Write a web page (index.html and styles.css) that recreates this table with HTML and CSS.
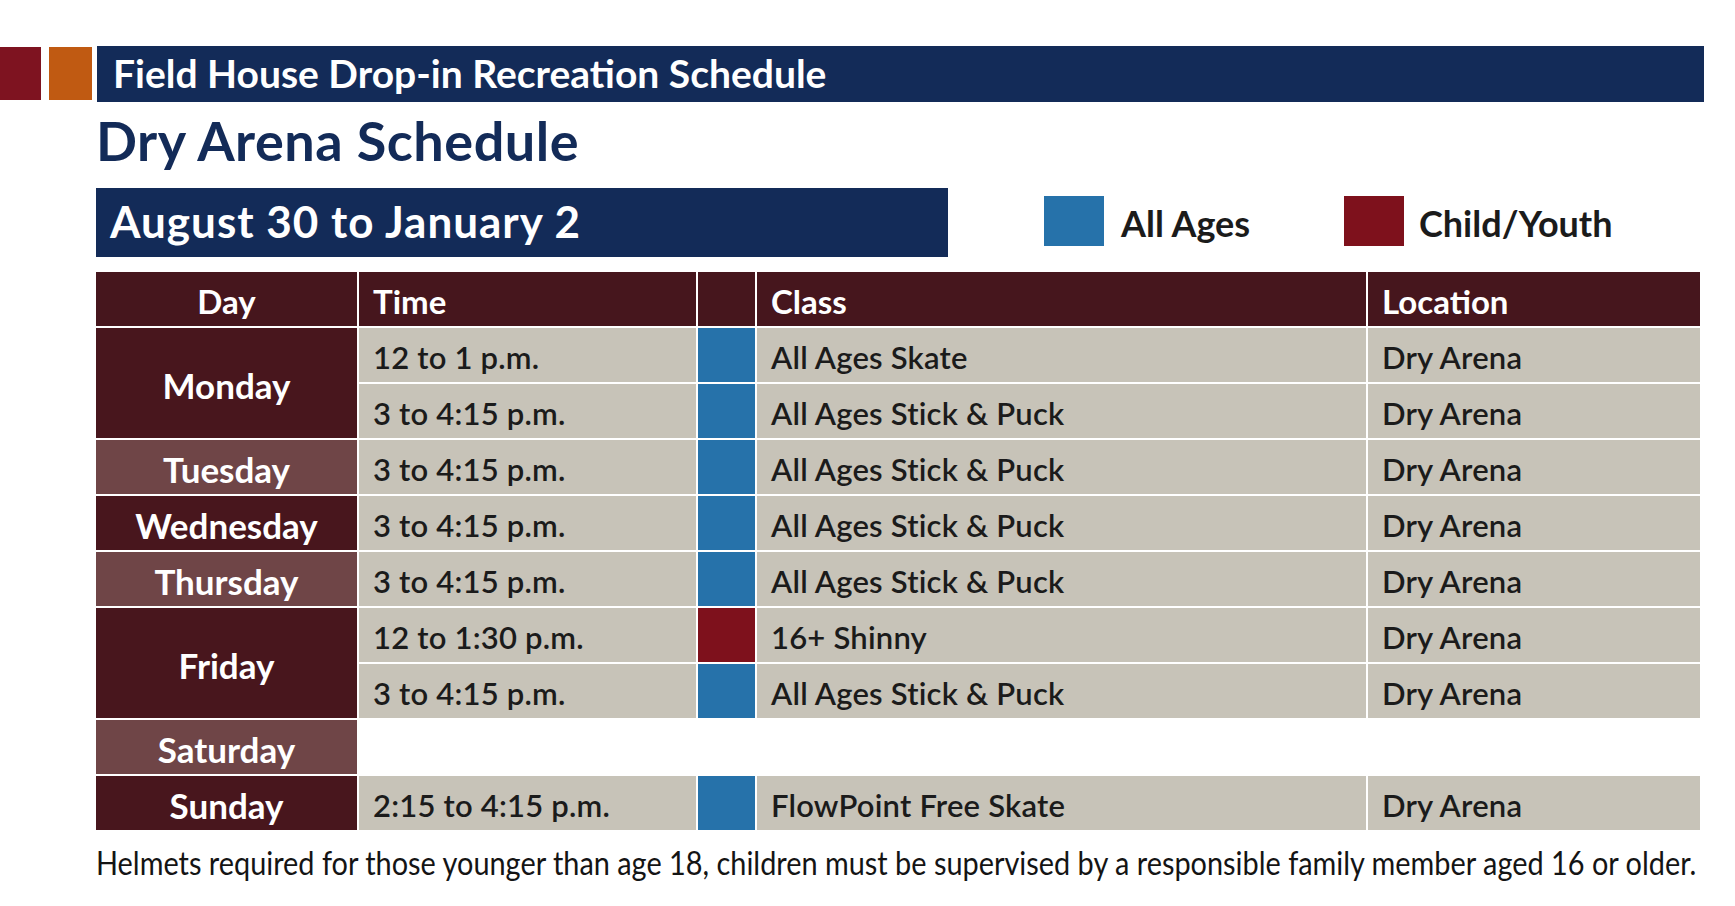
FILE: index.html
```html
<!DOCTYPE html>
<html lang="en">
<head>
<meta charset="utf-8">
<title>Dry Arena Schedule</title>
<link rel="stylesheet" href="styles.css">
</head>
<body>
<div class="page">
  <header class="topbar">
    <span class="mark mark-red"></span>
    <span class="mark mark-orange"></span>
    <div class="banner"><h1>Field House Drop-in Recreation Schedule</h1></div>
  </header>
  <main class="main">
    <h2 class="title">Dry Arena Schedule</h2>
    <div class="subrow">
      <div class="datebar">August 30 to January 2</div>
      <div class="legend">
        <div class="legend-item legend-first"><span class="swatch blue"></span>All Ages</div>
        <div class="legend-item"><span class="swatch red"></span>Child/Youth</div>
      </div>
    </div>
    <div class="schedule">
      <div class="cell head center">Day</div>
      <div class="cell head">Time</div>
      <div class="cell head"></div>
      <div class="cell head">Class</div>
      <div class="cell head">Location</div>

      <div class="cell day dark span2">Monday</div>
      <div class="cell">12 to 1 p.m.</div>
      <div class="cell tag blue"></div>
      <div class="cell">All Ages Skate</div>
      <div class="cell">Dry Arena</div>
      <div class="cell">3 to 4:15 p.m.</div>
      <div class="cell tag blue"></div>
      <div class="cell">All Ages Stick &amp; Puck</div>
      <div class="cell">Dry Arena</div>

      <div class="cell day light">Tuesday</div>
      <div class="cell">3 to 4:15 p.m.</div>
      <div class="cell tag blue"></div>
      <div class="cell">All Ages Stick &amp; Puck</div>
      <div class="cell">Dry Arena</div>

      <div class="cell day dark">Wednesday</div>
      <div class="cell">3 to 4:15 p.m.</div>
      <div class="cell tag blue"></div>
      <div class="cell">All Ages Stick &amp; Puck</div>
      <div class="cell">Dry Arena</div>

      <div class="cell day light">Thursday</div>
      <div class="cell">3 to 4:15 p.m.</div>
      <div class="cell tag blue"></div>
      <div class="cell">All Ages Stick &amp; Puck</div>
      <div class="cell">Dry Arena</div>

      <div class="cell day dark span2">Friday</div>
      <div class="cell">12 to 1:30 p.m.</div>
      <div class="cell tag red"></div>
      <div class="cell">16+ Shinny</div>
      <div class="cell">Dry Arena</div>
      <div class="cell">3 to 4:15 p.m.</div>
      <div class="cell tag blue"></div>
      <div class="cell">All Ages Stick &amp; Puck</div>
      <div class="cell">Dry Arena</div>

      <div class="cell day light">Saturday</div>
      <div class="cell empty"></div>

      <div class="cell day dark">Sunday</div>
      <div class="cell">2:15 to 4:15 p.m.</div>
      <div class="cell tag blue"></div>
      <div class="cell">FlowPoint Free Skate</div>
      <div class="cell">Dry Arena</div>
    </div>
    <p class="note"><span class="note-text">Helmets required for those younger than age 18, children must be supervised by a responsible family member aged 16 or older.</span></p>
  </main>
</div>
</body>
</html>
```

FILE: styles.css
```css
* { box-sizing: border-box; margin: 0; padding: 0; }
html, body { background: #ffffff; }
body {
  margin: 0;
  font-family: Lato, "Open Sans", "Liberation Sans", sans-serif;
  color: #1b1b1b;
  overflow-x: hidden;
}
.page { padding-top: 46px; }

.topbar { display: flex; height: 56px; margin-right: 31px; }
.mark { flex: none; width: 41px; height: 53px; margin-top: 1px; }
.mark-red { background: #7e1320; margin-right: 8px; }
.mark-orange { width: 43px; background: #c05a12; margin-right: 5px; }
.banner { flex: 1; background: #132b58; padding-left: 16px; }
.banner h1 {
  font-size: 39px;
  line-height: 54px;
  font-weight: 700;
  color: #ffffff;
  white-space: nowrap;
}

.main { padding: 0 35px 0 96px; }
.title {
  font-size: 54px;
  line-height: 60px;
  margin-top: 9px;
  font-weight: 700;
  letter-spacing: 0.5px;
  color: #132b58;
  white-space: nowrap;
}

.subrow { display: flex; align-items: center; margin-top: 17px; }
.datebar {
  flex: none;
  width: 852px;
  height: 69px;
  padding-left: 14px;
  background: #132b58;
  color: #ffffff;
  font-size: 44px;
  font-weight: 700;
  letter-spacing: 1px;
  line-height: 66px;
  white-space: nowrap;
}
.legend { display: flex; margin-left: 96px; }
.legend-item {
  display: flex;
  align-items: center;
  font-size: 36px;
  font-weight: 700;
  color: #1b1b1b;
  white-space: nowrap;
}
.legend-first { width: 300px; }
.swatch { flex: none; width: 60px; height: 50px; margin-right: 17px; margin-top: -4px; }
.swatch.blue { background: #2672aa; }
.swatch.red { background: #7e111c; margin-right: 15px; }

.schedule {
  display: grid;
  grid-template-columns: 261px 337px 57px 609px 1fr;
  grid-auto-rows: 54px;
  gap: 2px;
  margin-top: 15px;
}
.cell {
  display: flex;
  align-items: center;
  padding: 4px 0 0 14px;
  background: #c7c3b8;
  color: #1b1b1b;
  font-size: 31px;
  font-weight: 600;
  letter-spacing: 0.2px;
  white-space: nowrap;
}
.head { background: #46161d; color: #ffffff; font-size: 33px; font-weight: 700; letter-spacing: 0; }
.center { justify-content: center; padding-left: 0; }
.day {
  justify-content: center;
  padding-left: 0;
  color: #ffffff;
  font-size: 35px;
  font-weight: 700;
  letter-spacing: 0;
}
.day.dark { background: #48161d; }
.day.light { background: #6f4547; }
.span2 { grid-row: span 2; }
.tag { padding: 0; }
.tag.blue { background: #2672aa; }
.tag.red { background: #7e111c; }
.empty { grid-column: span 4; background: transparent; }

.note {
  margin-top: 13px;
  width: 100%;
  overflow: hidden;
  font-size: 32px;
  line-height: 40px;
  color: #141414;
  white-space: nowrap;
}
.note-text {
  display: inline-block;
  transform: scaleX(0.9025);
  transform-origin: 0 0;
}
```
